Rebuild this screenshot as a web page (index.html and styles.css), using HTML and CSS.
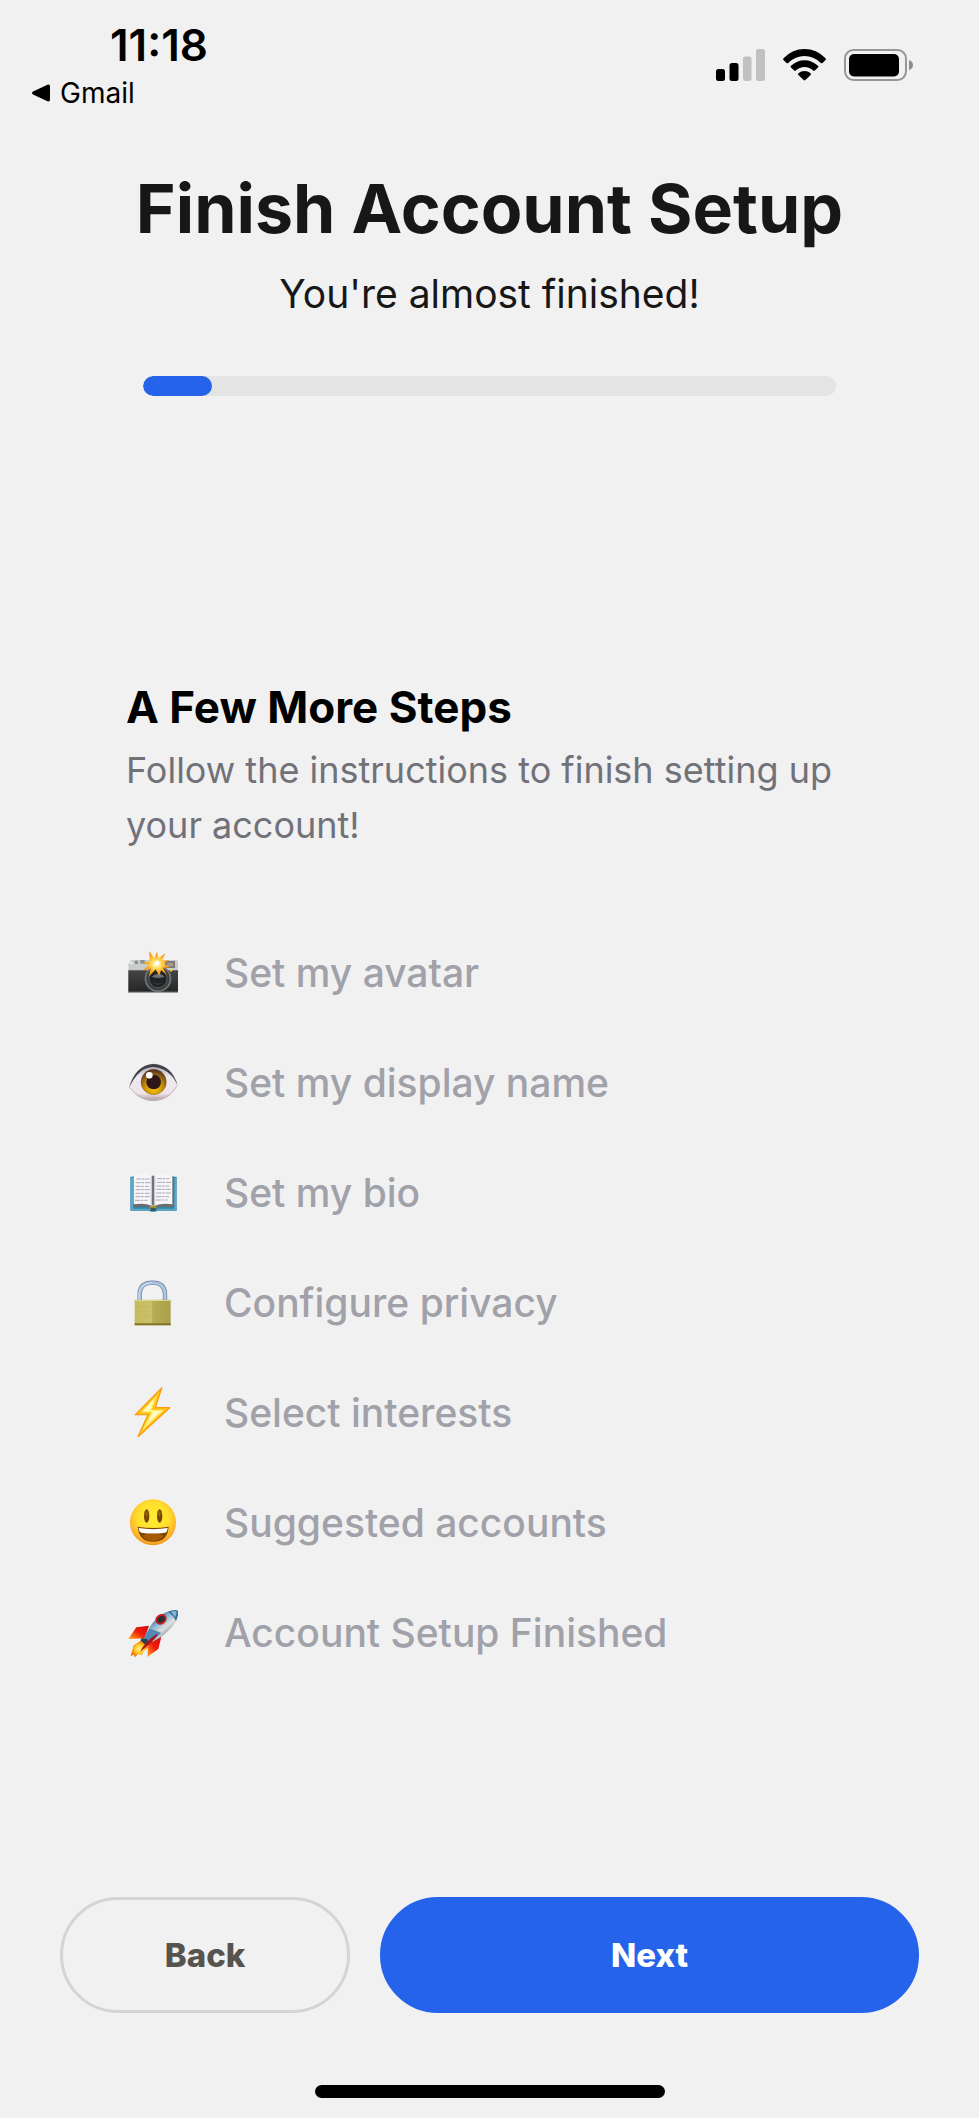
FILE: index.html
```
<!DOCTYPE html>
<html lang="en">
<head>
    <meta charset="UTF-8">
    <meta name="viewport" content="width=device-width, initial-scale=1.0">
    <title>Finish Account Setup</title>
    <link rel="stylesheet" href="styles.css">
</head>
<body>
    <div class="status-bar">
        <div class="status-left">
            <span class="time">11:18</span>
            <a class="back-app" href="#">
                <svg width="18" height="18" viewBox="0 0 18 18"><path d="M1 7.6 15.5.7Q18 0 18 2.5v13q0 2.5-2.5 1.8L1 10.4Q-1 9 1 7.6z"/></svg>
                Gmail
            </a>
        </div>
        <div class="status-icons">
            <svg width="49" height="32" viewBox="0 0 49 32">
                <rect x="0" y="20" width="9" height="12" rx="2.5"/>
                <rect x="13.500" y="14" width="9" height="18" rx="2.500"/>
                <rect x="27" y="7.500" width="8.500" height="24.500" rx="2.500" fill="#c1c1c1"/>
                <rect x="40" y="0" width="9" height="32" rx="2.500" fill="#c1c1c1"/>
            </svg>
            <svg width="43" height="32" viewBox="0 0 43 32">
                <path d="M.5 9.200Q9.500 0 21.500 0t21 9.200q.8.900 0 1.700l-3 3q-.8.800-1.700 0Q30.500 7 21.500 7T5.200 13.900q-.9.800-1.700 0l-3-3q-.8-.800 0-1.700z"/>
                <path d="M8 16.800q5.800-5.600 13.500-5.600T35 16.800q.8.800 0 1.600l-3.200 3.200q-.8.700-1.600 0-3.700-3.500-8.700-3.500t-8.700 3.500q-.8.700-1.600 0L8 18.400q-.8-.8 0-1.600z"/>
                <path d="M15.400 24.200q2.600-2.200 6.100-2.200t6.100 2.200q.9.800 0 1.700l-5.200 5.200q-.9.800-1.800 0l-5.200-5.200q-.9-.900 0-1.700z"/>
            </svg>
            <svg width="70" height="32" viewBox="0 0 70 32">
                <rect x="1" y="1" width="61" height="30" rx="8.500" fill="none" stroke="#979797" stroke-width="2"/>
                <rect x="5" y="5" width="50" height="22.500" rx="5"/>
                <path d="M65 11q4 1.500 4 5t-4 5z" fill="#8c8c8c"/>
            </svg>
        </div>
    </div>

    <header class="header">
        <h1>Finish Account Setup</h1>
        <p>You're almost finished!</p>
        <progress value="10" max="100" aria-label="Setup progress"></progress>
    </header>

    <main class="steps">
        <h2>A Few More Steps</h2>
        <p>Follow the instructions to finish setting up your account!</p>
        <ul>
            <li>
                <svg viewBox="48 51 162 162">
                    <defs>
                        <linearGradient id="body" x2="0" y2="1"><stop stop-color="#454545"/><stop offset="1" stop-color="#242424"/></linearGradient>
                        <radialGradient id="flash"><stop stop-color="#fff"/><stop offset=".3" stop-color="#ffe36b"/><stop offset=".65" stop-color="#ffad18"/><stop offset="1" stop-color="#f58400"/></radialGradient>
                    </defs>
                    <path d="M60 99q0-6 7-6h131q6 0 6 7v90H55v-84z" fill="#c9cccc"/>
                    <path d="M55 124h149v67H55z" fill="url(#body)"/>
                    <path d="M55 188h149v3H55z" fill="#b3b5b5"/>
                    <path d="M74 95h10v10H74zM91 93h13v11H91z" fill="#8d8f90"/>
                    <path d="M61 99h7v7h-7z" fill="#eee"/>
                    <rect x="165" y="96" width="30" height="21" fill="#777"/>
                    <rect x="171" y="101" width="19" height="11" fill="#b09688"/>
                    <circle cx="144" cy="149" r="40" fill="#737678"/>
                    <circle cx="144" cy="149" r="35" fill="#3c3f41"/>
                    <circle cx="144" cy="149" r="27" fill="#202325" stroke="#646767" stroke-width="2"/>
                    <path d="M125 143q21-17 39 0-18 8-39 0z" fill="#6a6f70"/>
                    <path d="M128 160q17 9 31 0-15 13-31 0z" fill="#555"/>
                    <circle cx="183" cy="124" r="4" fill="#f7cc20"/>
                    <path d="m118 66 14 22 9-20 5 20 20-15-10 22 22-2-18 11 21 11-22 1 12 22-18-15-5 18-11-20-21 23 6-26-24 7 19-17-20-7 22-3z" fill="url(#flash)"/>
                    <circle cx="142" cy="102" r="7" fill="#fff"/>
                </svg>
                Set my avatar
            </li>
            <li>
                <svg viewBox="48 49 162 162">
                    <defs>
                        <linearGradient id="white" x2="0" y2="1"><stop stop-color="#9f98a9"/><stop offset=".35" stop-color="#eee9f1"/><stop offset=".8" stop-color="#eee4e8"/><stop offset="1" stop-color="#a59199"/></linearGradient>
                        <radialGradient id="iris" cx=".5" cy=".75" r=".75"><stop stop-color="#f5c800"/><stop offset=".45" stop-color="#cb930c"/><stop offset="1" stop-color="#4e2b20"/></radialGradient>
                    </defs>
                    <path d="M55 143Q78 76 129 72q58 3 74 64-22 48-77 48-45-3-71-41z" fill="url(#white)"/>
                    <path d="M57 145Q75 78 129 73q56 3 74 64-24-52-74-55-44 1-72 63z" fill="#424047"/>
                    <path d="M60 144q29 37 66 38 53-1 76-45" fill="none" stroke="#c5b8bf" stroke-width="3"/>
                    <circle cx="131" cy="127" r="38" fill="url(#iris)" stroke="#71451d" stroke-width="1"/>
                    <circle cx="131" cy="127" r="22" fill="#2f1719"/>
                    <circle cx="118" cy="107" r="10" fill="#fff"/>
                </svg>
                Set my display name
            </li>
            <li>
                <svg viewBox="48 48 162 162">
                    <path d="M61 80h139v102H141q-2 4-12 3-9 1-11-3H61z" fill="#2c86ad"/>
                    <path d="M63 84h7v92h54v4H63zM193 84h5v96h-57v-4h52z" fill="#5ca7c4"/>
                    <path d="M69 78h121v93h-50q-5 1-11 6-6-5-11-6H69z" fill="#6d6b6b"/>
                    <path d="M71 77q31-10 57 1 30-11 59-1v86q-32-5-53 4h-9q-22-9-54-4z" fill="#f5f5fa"/>
                    <path d="M125 77h8v89h-8z" fill="#717177"/>
                    <path d="M122 78h3v87h-3zM133 78h3v87h-3z" fill="#cacad3"/>
                    <g stroke="#a9a8b2" stroke-width="3" stroke-dasharray="15 2 8 3">
                        <path d="M79 87h39M77 98h43M77 109h39M76 119h43M76 130h42M76 140h43M75 151h37"/>
                        <path d="M141 86h38M140 97h43M140 108h38M139 118h43M139 129h44M138 140h39M138 150h35"/>
                    </g>
                    <path d="M119 168h21v7h-21z" fill="#9f8a37"/>
                    <path d="M122 175h15v7h-15z" fill="#3e4a43"/>
                </svg>
                Set my bio
            </li>
            <li>
                <svg viewBox="51 45 162 162">
                    <defs>
                        <linearGradient id="brass"><stop stop-color="#c5bd5a"/><stop offset=".48" stop-color="#c8c16b"/><stop offset=".5" stop-color="#b8ad57"/><stop offset="1" stop-color="#aaa04a"/></linearGradient>
                    </defs>
                    <path d="M92 121v-22q1-34 38-34t38 34v22" fill="none" stroke="#6e7b8d" stroke-width="13"/>
                    <path d="M92 121v-22q1-34 38-34t38 34v22" fill="none" stroke="#a9c5e5" stroke-width="9"/>
                    <path d="M90 116V99q2-32 38-34" fill="none" stroke="#dfecf8" stroke-width="2"/>
                    <rect x="77" y="116" width="108" height="77" rx="2" fill="url(#brass)"/>
                    <path d="M78 117h106v3H78z" fill="#dcd58c"/>
                    <path d="M77 187h108v6H77z" fill="#81752b"/>
                    <path d="M79 136h104M79 151h104M79 167h104" stroke="#b6ac50" opacity=".6"/>
                </svg>
                Configure privacy
            </li>
            <li>
                <svg viewBox="51 45 162 162">
                    <path d="m158 51-79 80h38l-30 66 95-87h-43z" fill="#ffc51c" stroke="#ff9c0a" stroke-width="4" stroke-linejoin="round"/>
                    <path d="m145 71-48 53h31l-29 55 66-62h-38z" fill="#ffed74"/>
                    <path d="m136 83-35 38h33l-19 36 41-37h-34z" fill="#fffbc4"/>
                </svg>
                Select interests
            </li>
            <li>
                <svg viewBox="48 43 162 162">
                    <defs>
                        <radialGradient id="face" cy=".4" r=".62"><stop stop-color="#ffec32"/><stop offset=".55" stop-color="#ffdf2d"/><stop offset=".82" stop-color="#ffb52b"/><stop offset="1" stop-color="#ed8a1a"/></radialGradient>
                    </defs>
                    <circle cx="129" cy="122" r="69" fill="url(#face)"/>
                    <ellipse cx="110" cy="103" rx="8" ry="20" fill="#784500"/>
                    <ellipse cx="149" cy="103" rx="8" ry="20" fill="#784500"/>
                    <ellipse cx="110" cy="96" rx="3" ry="8" fill="#a36b08"/>
                    <ellipse cx="149" cy="96" rx="3" ry="8" fill="#a36b08"/>
                    <path d="M83 135q46 8 93 0-3 46-47 45-42 0-46-45z" fill="#7b4200"/>
                    <path d="M86 139q43 7 87 0-1 13-8 14-37 5-71 0-7-2-8-14z" fill="#fff"/>
                    <path d="M96 161q34-8 66 0-11 17-33 17t-33-17z" fill="#a75b00"/>
                </svg>
                Suggested accounts
            </li>
            <li>
                <svg viewBox="48 42 162 162">
                    <defs>
                        <linearGradient id="rocket" x1=".2" y1=".15" x2=".8" y2=".85"><stop offset=".1" stop-color="#315b86"/><stop offset=".35" stop-color="#84b5da"/><stop offset=".6" stop-color="#e0e1dd"/><stop offset="1" stop-color="#536f88"/></linearGradient>
                        <linearGradient id="fin" x1="1" y1="0" x2="0" y2="1"><stop stop-color="#d60c0c"/><stop offset=".5" stop-color="#f11a0b"/><stop offset="1" stop-color="#ffb11b"/></linearGradient>
                        <radialGradient id="fire"><stop stop-color="#fff693"/><stop offset=".5" stop-color="#ffcc24"/><stop offset="1" stop-color="#f36d08"/></radialGradient>
                    </defs>
                    <path d="m117 101-38 5-24 35 49-2z" fill="url(#fin)"/>
                    <path d="m154 135-9 36-33 24 3-45z" fill="url(#fin)"/>
                    <path d="m91 147-20 13-9 32 10-4 2 8 12-10 9 4 7-13 13-10-11-21z" fill="url(#fire)"/>
                    <path d="M204 56q-36-4-62 22-27 26-40 62l13 13q34-10 60-37 30-28 29-60z" fill="url(#rocket)"/>
                    <path d="M174 59q19-8 30-3 2 17-6 32-8-18-24-29z" fill="#356f9d"/>
                    <path d="M183 59q10-4 17 0-2 11-6 18-3-10-11-18z" fill="#88b8d8"/>
                    <path d="m121 108 33 14q-18 20-39 31l-13-13q7-17 19-32z" fill="#5289b8"/>
                    <path d="m121 108 33 14" stroke="#d3d0b6" stroke-width="2"/>
                    <ellipse cx="153" cy="82" rx="18" ry="15" transform="rotate(-35 153 82)" fill="#c7221e"/>
                    <ellipse cx="153" cy="82" rx="12" ry="9" transform="rotate(-35 153 82)" fill="#26303b"/>
                    <path d="m96 138 16 4 5 12-10 5-16-14z" fill="#28424a"/>
                    <path d="M143 124q-5 20-53 55 16-30 53-55z" fill="#ad1215"/>
                </svg>
                Account Setup Finished
            </li>
        </ul>
    </main>

    <footer class="footer">
        <div class="actions">
            <button class="btn" type="button">Back</button>
            <button class="btn btn-primary" type="button">Next</button>
        </div>
        <div class="home-indicator"></div>
    </footer>
</body>
</html>
```

FILE: styles.css
```
* {
    box-sizing: border-box;
    margin: 0;
    padding: 0;
}
body {
    display: flex;
    flex-direction: column;
    min-height: 100vh;
    font-family: Inter, "Liberation Sans", sans-serif;
    background: #f1f1f1;
    color: #171717;
}
svg {
    display: block;
    flex: none;
}
.status-bar {
    display: flex;
    justify-content: space-between;
    padding: 20px 65px 0 32px;
    color: #000;
}
.status-left {
    display: flex;
    flex-direction: column;
}
.time {
    padding-left: 78px;
    font-size: 44px;
    font-weight: 600;
    line-height: 50px;
}
.back-app {
    display: flex;
    align-items: center;
    gap: 10px;
    font-size: 28px;
    line-height: 46px;
    color: #000;
    text-decoration: none;
}
.status-icons {
    display: flex;
    gap: 18px;
    padding-top: 29px;
}
.header {
    display: flex;
    flex-direction: column;
    align-items: center;
    padding: 48px 60px 0;
    text-align: center;
}
h1 {
    font-size: 68px;
    font-weight: 700;
    line-height: 88px;
}
.header p {
    margin-top: 14px;
    font-size: 39px;
    line-height: 56px;
}
progress {
    width: 100%;
    max-width: 693px;
    height: 20px;
    margin-top: 54px;
    appearance: none;
    border: none;
    border-radius: 10px;
    overflow: hidden;
    background: #e4e4e4;
}
progress::-webkit-progress-bar {
    border-radius: 10px;
    background: #e4e4e4;
}
progress::-webkit-progress-value {
    border-radius: 10px;
    background: #2563eb;
}
.steps {
    padding: 281px 126px 60px;
}
h2 {
    font-size: 44px;
    font-weight: 700;
    line-height: 60px;
    color: #000;
}
.steps p {
    margin-top: 6px;
    font-size: 36px;
    line-height: 55px;
    color: #71717a;
}
ul {
    margin-top: 65px;
    list-style: none;
}
li {
    display: flex;
    align-items: center;
    gap: 44px;
    font-size: 39px;
    font-weight: 500;
    line-height: 110px;
    color: #a1a1aa;
}
li svg {
    width: 54px;
    height: 54px;
}
.footer {
    margin-top: auto;
    padding: 0 60px 20px;
}
.actions {
    display: grid;
    grid-template-columns: 35fr 65fr;
    gap: 30px;
}
.btn {
    height: 116px;
    border: 3px solid #d4d4d4;
    border-radius: 58px;
    background: transparent;
    color: #57534e;
    font-family: inherit;
    font-size: 33px;
    font-weight: 800;
}
.btn-primary {
    border-color: #2563eb;
    background: #2563eb;
    color: #fff;
}
.home-indicator {
    width: 350px;
    max-width: 100%;
    height: 13px;
    margin: 72px auto 0;
    border-radius: 7px;
    background: #000;
}
```
